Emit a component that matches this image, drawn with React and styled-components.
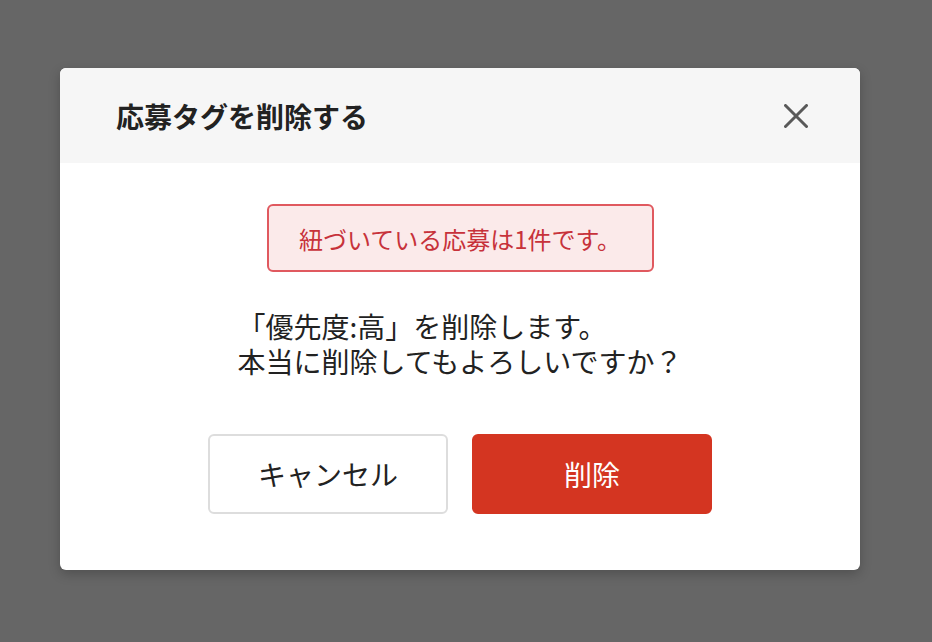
import styled, { createGlobalStyle } from "styled-components";

const GlobalStyle = createGlobalStyle`
  html, body {
    margin: 0;
    padding: 0;
    background: #666666;
    font-family: "Noto Sans CJK JP", "Noto Sans", sans-serif;
  }
`;

const Overlay = styled.div`
  width: 932px;
  height: 642px;
  background: #666666;
  padding: 68px 0 0 60px;
  box-sizing: border-box;
`;

const Modal = styled.div`
  width: 800px;
  height: 502px;
  background: #ffffff;
  border-radius: 6px;
  overflow: hidden;
  box-shadow: 0 4px 12px rgba(0, 0, 0, 0.22);
  display: flex;
  flex-direction: column;
`;

const Header = styled.header`
  height: 95px;
  flex-shrink: 0;
  background: #f6f6f6;
  display: flex;
  align-items: center;
  justify-content: space-between;
  padding: 0 52px 0 56px;
`;

const Title = styled.h2`
  margin: 0;
  font-size: 28px;
  font-weight: 700;
  color: #222222;
  line-height: 1;
`;

const CloseButton = styled.button`
  border: none;
  background: none;
  padding: 0;
  width: 24px;
  height: 24px;
  display: flex;
  cursor: pointer;
  color: #595959;
`;

const Body = styled.div`
  flex: 1;
  display: flex;
  flex-direction: column;
  align-items: center;
  padding-top: 41px;
`;

const Alert = styled.div`
  box-sizing: border-box;
  width: 387px;
  height: 68px;
  border: 2px solid #e0595f;
  border-radius: 6px;
  background: #fbeaea;
  color: #c7323a;
  font-size: 24px;
  display: flex;
  align-items: center;
  justify-content: center;
`;

const Message = styled.p`
  margin: 37px 0 0;
  font-size: 28px;
  line-height: 35px;
  color: #222222;
  text-align: left;
  white-space: pre;
`;

const Actions = styled.div`
  margin-top: 55px;
  display: flex;
  gap: 24px;
`;

const Button = styled.button`
  box-sizing: border-box;
  width: 240px;
  height: 80px;
  border-radius: 6px;
  font-family: inherit;
  font-size: 28px;
  cursor: pointer;
  border: 2px solid ${(p) => (p.$danger ? "#d43521" : "#dddddd")};
  background: ${(p) => (p.$danger ? "#d43521" : "#ffffff")};
  color: ${(p) => (p.$danger ? "#ffffff" : "#222222")};
`;

function CloseIcon() {
  return (
    <svg width="24" height="24" viewBox="0 0 24 24" fill="none">
      <path
        d="M1.5 1.5 L22.5 22.5 M22.5 1.5 L1.5 22.5"
        stroke="currentColor"
        strokeWidth="3"
        strokeLinecap="round"
      />
    </svg>
  );
}

export default function App() {
  return (
    <>
      <GlobalStyle />
      <Overlay>
        <Modal>
          <Header>
            <Title>応募タグを削除する</Title>
            <CloseButton aria-label="閉じる">
              <CloseIcon />
            </CloseButton>
          </Header>
          <Body>
            <Alert>紐づいている応募は1件です。</Alert>
            <Message>
              {"「優先度:高」を削除します。\n本当に削除してもよろしいですか？"}
            </Message>
            <Actions>
              <Button>キャンセル</Button>
              <Button $danger>削除</Button>
            </Actions>
          </Body>
        </Modal>
      </Overlay>
    </>
  );
}
